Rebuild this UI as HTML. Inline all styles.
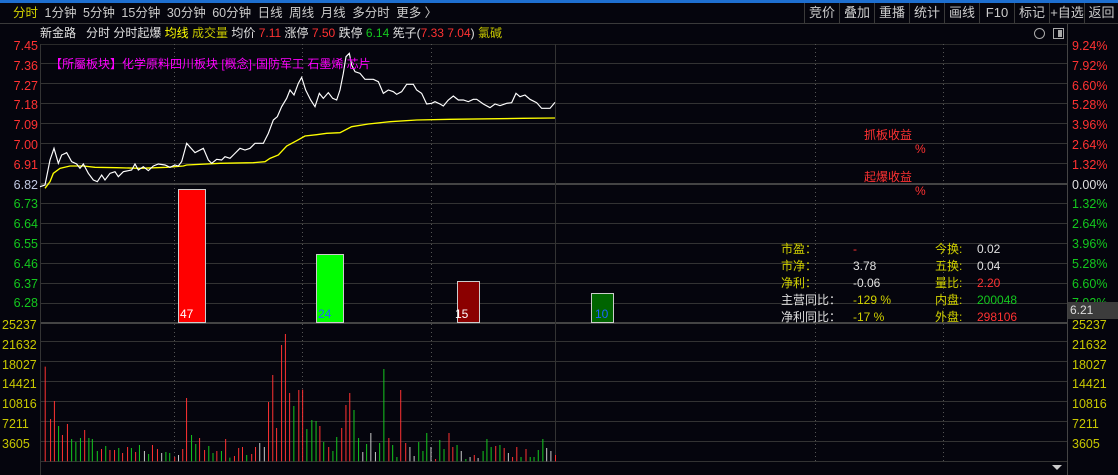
<!DOCTYPE html>
<html><head><meta charset="utf-8"><style>
*{margin:0;padding:0;box-sizing:border-box}
body{width:1118px;height:475px;background:#05050d;overflow:hidden;position:relative;font-family:"Liberation Sans","Noto Sans CJK SC",sans-serif;font-size:12px;color:#c8c8c8}
.a{position:absolute;white-space:nowrap;line-height:14px}
.r{color:#ff3232}.g{color:#14c81e}.y{color:#d2d200}.w{color:#e0e0e0}.o{color:#c8c800}
.tab span{margin-right:6.5px}
.btn{position:absolute;top:3px;height:21px;border-left:1px solid #3a3a3a;line-height:20px;font-size:13px;color:#ccc;text-align:center}
</style></head><body>
<div style="position:absolute;left:0;top:0;width:1118px;height:3px;background:#1e6fd0"></div>
<div style="position:absolute;left:0;top:23px;width:1118px;height:1px;background:#3a3a3a"></div>
<div class="a tab" style="left:13px;top:6px;font-size:12.5px;color:#ccc"><span class="y">分时</span><span>1分钟</span><span>5分钟</span><span>15分钟</span><span>30分钟</span><span>60分钟</span><span>日线</span><span>周线</span><span>月线</span><span>多分时</span><span>更多 〉</span></div>
<div class="btn" style="left:804px;width:35px">竞价</div>
<div class="btn" style="left:839px;width:35px">叠加</div>
<div class="btn" style="left:874px;width:35px">重播</div>
<div class="btn" style="left:909px;width:35px">统计</div>
<div class="btn" style="left:944px;width:35px">画线</div>
<div class="btn" style="left:979px;width:35px">F10</div>
<div class="btn" style="left:1014px;width:35px">标记</div>
<div class="btn" style="left:1049px;width:35px">+自选</div>
<div class="btn" style="left:1084px;width:34px">返回</div>
<div class="a" style="left:40px;top:26px;font-size:12px"><span class="w">新金路 &nbsp;&nbsp;分时 分时起爆 </span><span style="color:#ffff00">均线 </span><span class="o">成交量 </span><span class="w">均价 </span><span class="r">7.11 </span><span class="w">涨停 </span><span class="r">7.50 </span><span class="w">跌停 </span><span class="g">6.14 </span><span class="w">筅子(</span><span class="r">7.33 7.04</span><span class="w">) </span><span class="o">氯碱</span></div>
<div style="position:absolute;left:1034px;top:28px;width:11px;height:11px;border:1px solid #aaa;border-radius:50%"></div>
<div style="position:absolute;left:1053px;top:28px;width:11px;height:11px;border:1px solid #aaa"><div style="position:absolute;right:1px;top:1px;width:4px;height:7px;background:#aaa"></div></div>

<svg style="position:absolute;left:0;top:0" width="1118" height="475">
<g stroke="#333" stroke-width="1">
<line x1="40" y1="44.5" x2="1068" y2="44.5" stroke="#2a2a2a"/>
<line x1="40" y1="63.5" x2="1068" y2="63.5"/><line x1="40" y1="83.5" x2="1068" y2="83.5"/><line x1="40" y1="103.5" x2="1068" y2="103.5"/><line x1="40" y1="123.5" x2="1068" y2="123.5"/><line x1="40" y1="143.5" x2="1068" y2="143.5"/><line x1="40" y1="163.5" x2="1068" y2="163.5"/>
<line x1="40" y1="184" x2="1068" y2="184" stroke="#444" stroke-width="2"/>
<line x1="40" y1="203.5" x2="1068" y2="203.5"/><line x1="40" y1="223.5" x2="1068" y2="223.5"/><line x1="40" y1="243.5" x2="1068" y2="243.5"/><line x1="40" y1="263.5" x2="1068" y2="263.5"/><line x1="40" y1="283.5" x2="1068" y2="283.5"/><line x1="40" y1="303.5" x2="1068" y2="303.5"/>
<line x1="40" y1="323" x2="1068" y2="323" stroke="#444" stroke-width="2"/>
<line x1="40" y1="341.5" x2="1068" y2="341.5"/><line x1="40" y1="361.5" x2="1068" y2="361.5"/><line x1="40" y1="381.5" x2="1068" y2="381.5"/><line x1="40" y1="401.5" x2="1068" y2="401.5"/><line x1="40" y1="421.5" x2="1068" y2="421.5"/><line x1="40" y1="441.5" x2="1068" y2="441.5"/><line x1="40" y1="461.5" x2="1068" y2="461.5"/>
<line x1="40.5" y1="44" x2="40.5" y2="475"/>
<line x1="555.5" y1="44" x2="555.5" y2="461"/>
<line x1="1067.5" y1="24" x2="1067.5" y2="475" stroke="#444"/>
</g>
<g stroke="#555" stroke-dasharray="1,3">
<line x1="174.5" y1="44" x2="174.5" y2="461"/><line x1="302.5" y1="44" x2="302.5" y2="461"/><line x1="431.5" y1="44" x2="431.5" y2="461"/><line x1="815.5" y1="44" x2="815.5" y2="461"/><line x1="943.5" y1="44" x2="943.5" y2="461"/>
</g>
<rect x="178.5" y="189.5" width="27" height="133" fill="#ff0000" stroke="#ccc"/>
<rect x="316.5" y="254.5" width="27" height="68" fill="#00ff00" stroke="#ccc"/>
<rect x="457.5" y="281.5" width="22" height="41" fill="#8b0000" stroke="#ccc"/>
<rect x="591.5" y="293.5" width="22" height="29" fill="#006400" stroke="#ccc"/>
<g transform="translate(40,40) scale(0.33333)" fill="none">
<polyline stroke="#ffff00" stroke-width="4" points="15,445 30,425 40,400 60,385 90,378 130,378 165,382 230,383 300,385 380,382 430,378 440,375 540,370 640,368 675,365 690,355 715,345 740,318 770,302 795,288 830,284 860,280 900,278 935,260 985,252 1050,245 1130,240 1230,238 1450,235 1545,234"/>
<polyline stroke="#ffffff" stroke-width="3.5" points="0,440 15,435 30,360 42,325 55,370 65,345 80,338 95,365 110,372 120,385 130,372 145,400 160,420 172,425 185,405 195,420 210,400 225,395 235,410 250,395 265,392 275,390 285,372 295,390 310,380 325,392 340,378 355,372 375,375 390,382 405,375 415,378 425,365 440,310 465,338 490,325 505,360 515,370 530,358 545,360 555,350 570,355 580,345 600,325 615,330 630,325 645,310 670,310 685,280 700,240 712,230 725,200 740,175 750,150 762,165 775,130 785,112 797,150 812,180 825,200 838,160 850,175 865,158 878,175 890,180 900,150 910,100 918,50 928,40 935,75 945,95 960,100 975,118 1000,118 1015,125 1030,160 1045,150 1060,155 1070,163 1085,155 1100,133 1120,133 1130,150 1145,160 1160,192 1175,190 1185,185 1200,192 1210,198 1225,180 1240,168 1255,180 1270,180 1285,185 1300,178 1310,178 1330,192 1350,203 1365,192 1380,197 1400,190 1415,188 1428,160 1440,170 1455,165 1470,178 1490,188 1505,205 1530,205 1545,187"/>
</g>
<g transform="translate(0,320) scale(0.3831,0.33333)" fill="none">
<path vector-effect="non-scaling-stroke" stroke="#ff3232" stroke-width="1" d="M118 424V140M132 424V297M142 424V243M163 424V345M176 424V312M221 424V330M265 424V387M287 424V390M299 424V390M320 424V399M333 424V381M354 424V396M398 424V375M411 424V387M456 424V411M477 424V387M487 424V234M521 424V354M534 424V390M566 424V393M589 424V357M612 424V408M623 424V384M633 424V381M657 424V402M667 424V381M701 424V246M712 424V165M722 424V324M735 424V75M745 424V42M756 424V219M780 424V210M790 424V209M835 424V318M858 424V381M892 424V324M903 424V255M913 424V219M1015 424V354M1046 424V210M1059 424V369M1137 424V417M1172 424V339M1182 424V381M1238 424V405M1294 424V378M1316 424V384M1338 424V411M1349 424V381M1373 424V387M1450 424V405"/>
<path vector-effect="non-scaling-stroke" stroke="#14c81e" stroke-width="1" d="M153 424V318M187 424V357M198 424V366M210 424V354M232 424V354M241 424V357M254 424V393M276 424V378M310 424V384M343 424V384M364 424V375M388 424V402M433 424V396M443 424V399M500 424V345M511 424V372M545 424V378M556 424V399M578 424V393M600 424V413M644 424V405M767 424V258M801 424V327M814 424V300M825 424V303M845 424V366M869 424V393M879 424V351M924 424V270M936 424V354M957 424V372M991 424V369M1002 424V147M1025 424V375M1036 424V411M1093 424V366M1104 424V393M1114 424V339M1148 424V360M1159 424V387M1193 424V375M1216 424V417M1261 424V393M1271 424V357M1282 424V381M1305 424V375M1360 424V411M1384 424V411M1394 424V411M1405 424V390M1417 424V357"/>
<path vector-effect="non-scaling-stroke" stroke="#c8c8c8" stroke-width="1" d="M377 424V393M422 424V399M466 424V405M678 424V369M690 424V381M947 424V396M968 424V339M980 424V396M1070 424V381M1081 424V408M1125 424V381M1204 424V393M1227 424V411M1248 424V414M1327 424V399M1427 424V384M1438 424V393"/>
</g>
<path d="M1052 465h10l-5 5z" fill="#ccc"/>
</svg>

<div class="a" style="left:50px;top:57px;font-size:12px;color:#ff00ff">【所屬板块】化学原料四川板块 [概念]-国防军工 石墨烯 芯片</div>
<div class="a" style="left:180px;top:307px;color:#fff">47</div>
<div class="a" style="left:318px;top:307px;color:#1e64ff">24</div>
<div class="a" style="left:455px;top:307px;color:#fff">15</div>
<div class="a" style="left:595px;top:307px;color:#1e64ff">10</div>

<div class="a r" style="left:864px;top:128px">抓板收益</div>
<div class="a r" style="left:915px;top:142px">%</div>
<div class="a r" style="left:864px;top:170px">起爆收益</div>
<div class="a r" style="left:915px;top:184px">%</div>

<div class="a" style="left:781px;top:241px;line-height:17px"><span class="y">市盈：</span><br><span class="y">市净：</span><br><span class="y">净利：</span><br><span class="w">主营同比：</span><br><span class="w">净利同比：</span></div>
<div class="a" style="left:853px;top:241px;line-height:17px"><span class="r">-</span><br><span class="w">3.78</span><br><span class="w">-0.06</span><br><span class="y">-129 %</span><br><span class="y">-17 %</span></div>
<div class="a y" style="left:935px;top:241px;line-height:17px">今换:<br>五换:<br>量比:<br>内盘:<br>外盘:</div>
<div class="a" style="left:977px;top:241px;line-height:17px"><span class="w">0.02</span><br><span class="w">0.04</span><br><span class="r">2.20</span><br><span class="g">200048</span><br><span class="r">298106</span></div>

<div class="a" style="left:12px;top:37px;line-height:19.8px;font-size:12.5px;text-align:right;width:26px"><span class="r">7.45<br>7.36<br>7.27<br>7.18<br>7.09<br>7.00<br>6.91</span><br><span style="color:#c0c8e0">6.82</span><br><span class="g">6.73<br>6.64<br>6.55<br>6.46<br>6.37<br>6.28</span></div>
<div class="a o" style="left:2px;top:316px;line-height:19.8px;font-size:12.5px">25237<br>21632<br>18027<br>14421<br>10816<br>7211<br>3605</div>
<div class="a" style="left:1072px;top:37px;line-height:19.8px;font-size:12.5px"><span class="r">9.24%<br>7.92%<br>6.60%<br>5.28%<br>3.96%<br>2.64%<br>1.32%</span><br><span class="w">0.00%</span><br><span class="g">1.32%<br>2.64%<br>3.96%<br>5.28%<br>6.60%<br>7.92%</span></div>
<div class="a o" style="left:1072px;top:316px;line-height:19.8px;font-size:12.5px">25237<br>21632<br>18027<br>14421<br>10816<br>7211<br>3605</div>
<div class="a" style="left:1068px;top:302px;width:50px;height:17px;background:#3c3c3c;color:#ddd;padding-left:2px;line-height:17px">6.21</div>
</body></html>
